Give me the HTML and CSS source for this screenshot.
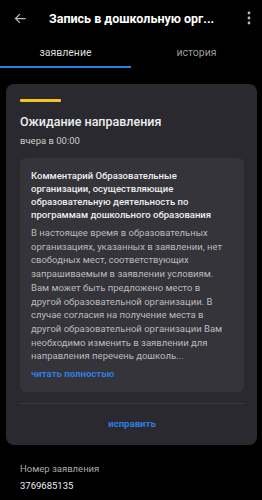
FILE: index.html
```html
<!DOCTYPE html>
<html lang="ru">
<head>
  <meta charset="UTF-8" />
  <title>Запись в дошкольную организацию</title>
  <link rel="stylesheet" href="styles.css">
</head>
<body>
  <div class="topbar">
    <svg class="icon" width="15" height="15" viewBox="0 0 24 24"><path d="M20 12H5M11 5l-7 7 7 7" fill="none" stroke="#bbb" stroke-width="2"/></svg>
    <div class="title">Запись в дошкольную орг...</div>
    <svg class="icon" width="6" height="16" viewBox="0 0 6 16"><circle cx="3" cy="3" r="1.4" fill="#bbb"/><circle cx="3" cy="8" r="1.4" fill="#bbb"/><circle cx="3" cy="13" r="1.4" fill="#bbb"/></svg>
  </div>

  <div class="tabs">
    <div class="tab active">заявление</div>
    <div class="tab">история</div>
  </div>

  <div class="card">
    <div class="status-bar"></div>
    <h2>Ожидание направления</h2>
    <div class="time">вчера в 00:00</div>

    <div class="comment">
      <div class="comment-title">Комментарий Образовательные организации, осуществляющие образовательную деятельность по программам дошкольного образования</div>
      <p>В настоящее время в образовательных организациях, указанных в заявлении, нет свободных мест, соответствующих запрашиваемым в заявлении условиям.<br>Вам может быть предложено место в другой образовательной организации. В случае согласия на получение места в другой образовательной организации Вам необходимо изменить в заявлении для направления перечень дошколь...</p>
      <a class="link more" href="#">читать полностью</a>
    </div>

    <div class="divider"></div>
    <a class="link fix" href="#">исправить</a>
  </div>

  <div class="info">
    <div class="info-label">Номер заявления</div>
    <div class="info-value">3769685135</div>
  </div>
</body>
</html>
```

FILE: styles.css
```css
body {
  font-family: Roboto, "Noto Sans", sans-serif;
  background: #000;
  color: #fff;
  margin: 0;
}

.topbar {
  display: flex;
  align-items: center;
  height: 36px;
  padding: 0 10px 0 13px;
}

.title {
  flex: 1;
  margin-left: 21px;
  font-size: 12.5px;
  font-weight: 700;
  white-space: nowrap;
}

.tabs {
  display: flex;
  height: 32px;
}

.tab {
  flex: 1;
  text-align: center;
  font-size: 10.5px;
  color: #9a9a9a;
  padding-top: 10px;
  box-sizing: border-box;
}

.tab.active {
  color: #ddd;
  border-bottom: 2px solid #2f7de0;
}

.card {
  background: #29292f;
  border-radius: 8px;
  margin: 16px 5px 0 6px;
  padding: 15px 13px 15px 14px;
}

.status-bar {
  width: 41px;
  height: 3px;
  background: #f5c518;
  border-radius: 1px;
}

h2 {
  font-size: 12.5px;
  font-weight: 500;
  line-height: 15px;
  margin: 12px 0 0;
  color: #eee;
}

.time {
  font-size: 9.5px;
  line-height: 11px;
  color: #ccc;
  margin-top: 6px;
}

.comment {
  background: #34343a;
  border-radius: 6px;
  margin-top: 12px;
  padding: 11px 17px 13px 11px;
}

.comment-title {
  font-size: 9.5px;
  font-weight: 500;
  line-height: 13px;
  color: #eee;
}

.comment p {
  font-size: 9.5px;
  line-height: 13.7px;
  color: #bbb;
  margin: 5px 0 0;
}

.link {
  display: block;
  color: #2f7de0;
  font-size: 9.6px;
  line-height: 12px;
  font-weight: 700;
  text-decoration: none;
}

.more {
  line-height: 11px;
  margin-top: 5px;
}

.divider {
  height: 1px;
  background: #3a3a40;
  margin-top: 11px;
}

.fix {
  text-align: center;
  margin-top: 14px;
}

.info {
  padding: 18px 20px;
}

.info-label {
  font-size: 9.5px;
  line-height: 11px;
  color: #aaa;
}

.info-value {
  font-size: 9.5px;
  line-height: 11px;
  color: #eee;
  margin-top: 6px;
}
```
